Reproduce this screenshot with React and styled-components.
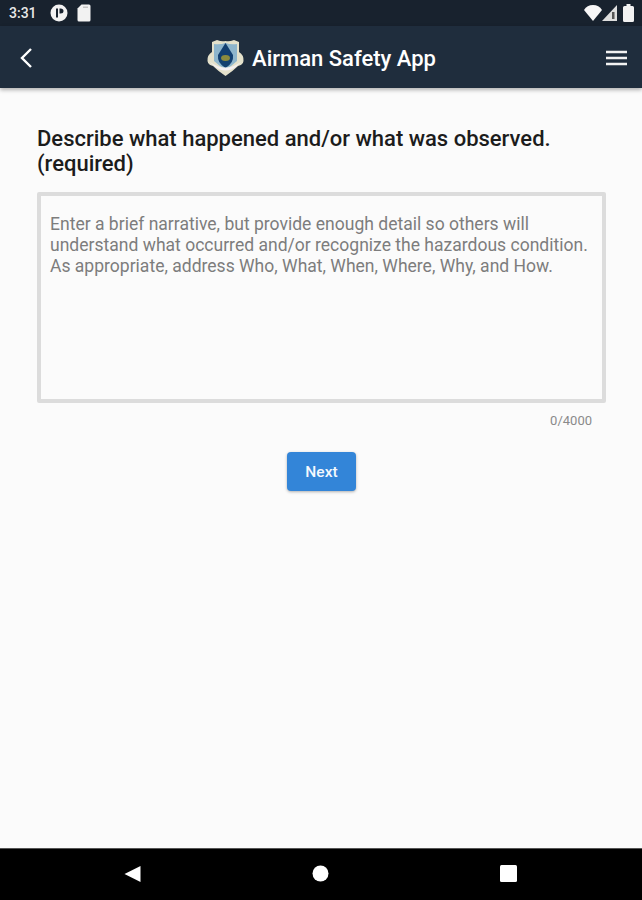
import React from "react";
import styled, { createGlobalStyle } from "styled-components";

const Global = createGlobalStyle`
  html, body { margin: 0; padding: 0; background: #fbfbfb; }
  * { box-sizing: border-box; }
`;

const Screen = styled.div`
  width: 642px;
  height: 900px;
  display: flex;
  flex-direction: column;
  font-family: Roboto, "Liberation Sans", sans-serif;
  background: #fbfbfb;
  overflow: hidden;
`;

const StatusBar = styled.div`
  height: 26px;
  flex: none;
  background: #18222e;
  display: flex;
  align-items: center;
  justify-content: space-between;
  padding: 0 8px 0 9px;
  color: #e8e8e8;
`;

const StatusGroup = styled.div`
  display: flex;
  align-items: center;
  gap: ${(p) => p.$gap || 0}px;
`;

const Clock = styled.span`
  font-size: 14px;
  font-weight: 500;
  margin-right: 13px;
`;

const Header = styled.header`
  height: 62px;
  flex: none;
  background: #1f2d3d;
  display: flex;
  align-items: center;
  justify-content: space-between;
  padding: 2px 15px 0 19px;
  box-shadow: 0 2px 4px rgba(0, 0, 0, 0.3);
  position: relative;
  z-index: 1;
`;

const IconButton = styled.div`
  display: flex;
  align-items: center;
  justify-content: center;
`;

const Brand = styled.div`
  display: flex;
  align-items: center;
  gap: 8px;
  margin-left: 4px;
`;

const BrandName = styled.span`
  color: #fff;
  font-size: 22px;
  font-weight: 500;
`;

const Content = styled.main`
  flex: 1;
  padding: 38px 36px 0 37px;
  display: flex;
  flex-direction: column;
`;

const Title = styled.h1`
  margin: 0;
  font-size: 22px;
  line-height: 25px;
  font-weight: 500;
  color: #1c1c1c;
`;

const Field = styled.div`
  margin-top: 16px;
  height: 211px;
  border: 4px solid #dcdcdc;
  border-radius: 2px;
  padding: 18px 9px;
  font-size: 17.55px;
  line-height: 21px;
  color: #7d7d7d;
`;

const Counter = styled.div`
  margin-top: 10px;
  padding-right: 14px;
  text-align: right;
  font-size: 13px;
  line-height: 15px;
  color: #8a8a8a;
`;

const Actions = styled.div`
  margin-top: 24px;
  display: flex;
  justify-content: center;
`;

const NextButton = styled.button`
  width: 69px;
  height: 39px;
  border: none;
  border-radius: 4px;
  background: #3385d8;
  color: #f4f8fd;
  font-family: inherit;
  font-size: 15.5px;
  font-weight: 500;
  box-shadow: 0 1px 3px rgba(0, 0, 0, 0.3);
`;

const NavBar = styled.nav`
  height: 52px;
  flex: none;
  background: #000;
  border-top: 1px solid #555;
  display: flex;
  align-items: center;
  justify-content: center;
  gap: 171px;
  padding: 0 1px 2px 0;
`;

const Shield = () => (
  <svg width="37" height="38" viewBox="0 0 37 38">
    <path d="M5 3 L10 1 Q15 3 18.5 2 Q22 3 27 1 L32 3 L32 13 Q37 16 36.5 22 Q36 26 31 27 Q26 32 18.5 37 Q11 32 6 27 Q1 26 0.5 22 Q0 16 5 13 Z" fill="#e4e1cb" />
    <path d="M7 5 Q13 6 18.5 4 Q24 6 30 5 L30 22 Q25 27 18.5 30 Q12 27 7 22 Z" fill="#8db5cc" />
    <path d="M18.5 4 L26 16 Q27 24 18.5 29 Q10 24 11 16 Z" fill="#123f70" />
    <ellipse cx="18.5" cy="19" rx="4.5" ry="3" fill="#8a8a3e" />
    <path d="M3 23 Q18.5 34 34 23 L30 27 Q18.5 36 7 27 Z" fill="#f3eff2" />
  </svg>
);

export default function App() {
  return (
    <Screen>
      <Global />
      <StatusBar>
        <StatusGroup>
          <Clock>3:31</Clock>
          <svg width="18" height="18" viewBox="0 0 18 18">
            <circle cx="9" cy="9" r="8.5" fill="#f2f2f2" />
            <path d="M7 4.5 V13.5" stroke="#18222e" strokeWidth="2" />
            <path d="M9.5 4.5 H10.5 Q13.5 4.5 13.5 7 Q13.5 9.5 10.5 9.5 H9.5 Z" fill="#18222e" />
          </svg>
          <svg width="14" height="18" viewBox="0 0 14 18" style={{ marginLeft: 9 }}>
            <path d="M4.5 0.5 H12 Q13.5 0.5 13.5 2 V16 Q13.5 17.5 12 17.5 H2 Q0.5 17.5 0.5 16 V4.5 Z" fill="#f2f2f2" />
            <path d="M6 2.5 H11 V4 H6 Z" fill="#c4c4c4" />
          </svg>
        </StatusGroup>
        <StatusGroup>
          <svg width="18" height="16" viewBox="0 0 18 16">
            <path d="M0 5 Q3 0 9 0 Q15 0 18 5 L9 16 Z" fill="#f7f7f7" />
          </svg>
          <svg width="15" height="16" viewBox="0 0 15 16">
            <path d="M15 0 V16 H0 Z" fill="#dedede" />
            <path d="M10 7 H12.5 V14 H10 Z" fill="#555" />
          </svg>
          <svg width="11" height="18" viewBox="0 0 11 18" style={{ marginLeft: 6 }}>
            <path d="M3.5 0 H7.5 V2 H9.5 Q11 2 11 3.5 V16.5 Q11 18 9.5 18 H1.5 Q0 18 0 16.5 V3.5 Q0 2 1.5 2 H3.5 Z" fill="#f2f2f2" />
          </svg>
        </StatusGroup>
      </StatusBar>
      <Header>
        <IconButton>
          <svg width="14" height="22" viewBox="0 0 14 22" fill="none" stroke="#fff" strokeWidth="2.4">
            <path d="M12 2 L3 11 L12 20" />
          </svg>
        </IconButton>
        <Brand>
          <Shield />
          <BrandName>Airman Safety App</BrandName>
        </Brand>
        <IconButton>
          <svg width="21" height="16" viewBox="0 0 21 16" stroke="#f2f2f2" strokeWidth="2.4">
            <path d="M0 2 H21 M0 8 H21 M0 14 H21" />
          </svg>
        </IconButton>
      </Header>
      <Content>
        <Title>
          Describe what happened and/or what was observed.
          <br />
          (required)
        </Title>
        <Field>
          Enter a brief narrative, but provide enough detail so others will understand what occurred and/or recognize the hazardous condition. As appropriate, address Who, What, When, Where, Why, and How.
        </Field>
        <Counter>0/4000</Counter>
        <Actions>
          <NextButton>Next</NextButton>
        </Actions>
      </Content>
      <NavBar>
        <svg width="17" height="18" viewBox="0 0 17 18" fill="#fff">
          <path d="M16.5 1 V17 L0.5 9 Z" />
        </svg>
        <svg width="17" height="17" viewBox="0 0 17 17" fill="#fff">
          <circle cx="8.5" cy="8.5" r="8" />
        </svg>
        <svg width="17" height="17" viewBox="0 0 17 17" fill="#fff">
          <rect x="0" y="0" width="17" height="17" rx="1.5" />
        </svg>
      </NavBar>
    </Screen>
  );
}
